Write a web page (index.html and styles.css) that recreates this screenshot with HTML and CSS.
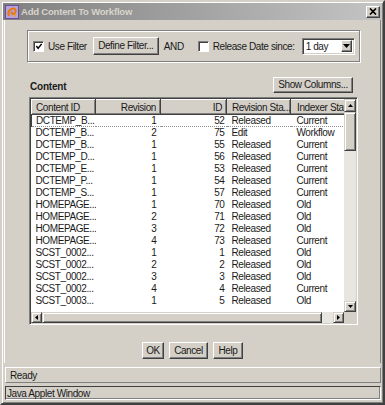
FILE: index.html
```html
<!DOCTYPE html>
<html lang="en">
  <head>
    <meta charset="UTF-8" />
    <meta name="viewport" content="width=device-width, initial-scale=1.0" />
    <title>Add Content To Workflow</title>
    <link rel="stylesheet" href="styles.css">
  </head>
  <body>
    <div class="window">
      <div class="titlebar">
        <svg class="app-icon" width="14" height="14" viewBox="0 0 14 14">
          <rect x="0.5" y="0.5" width="13" height="13" fill="#b7a3dc" stroke="#6a4c9c" />
          <path d="M4 11 C2 7 5 3 9 3.5 C11.5 4.5 11 8.5 8.5 9 C6.5 9.5 6 7.5 7.5 6.5" fill="none" stroke="#e8780c" stroke-width="2" />
          <circle cx="10" cy="10.5" r="1.3" fill="#f0a020" />
        </svg>
        <span class="title">Add Content To Workflow</span>
        <span class="close-btn">
          <svg width="8" height="7" viewBox="0 0 8 7">
            <path d="M1 0.5 L7 6.5 M7 0.5 L1 6.5" stroke="#000" stroke-width="1.7" />
          </svg>
        </span>
      </div>

      <div class="main">
        <div class="filter-group">
          <span class="check-box">
            <svg width="9" height="9" viewBox="0 0 9 9">
              <path d="M1.5 4 L3.5 6.5 L7.5 1.5" fill="none" stroke="#000" stroke-width="1.6" />
            </svg>
          </span>
          <span class="check-label">Use Filter</span>
          <button class="btn btn-filter">Define Filter...</button>
          <span class="and">AND</span>
          <span class="check-box"></span>
          <span class="check-label">Release Date since:</span>
          <div class="combo">
            <span class="combo-text">1 day</span>
            <span class="combo-arrow">
              <svg width="7" height="4" viewBox="0 0 7 4"><polygon points="0,0 7,0 3.5,4" fill="#000" /></svg>
            </span>
          </div>
        </div>

        <div class="content-head">
          <span class="section-label">Content</span>
          <button class="btn btn-columns">Show Columns...</button>
        </div>

        <div class="table-box">
          <div class="viewport">
            <table class="grid">
              <colgroup>
                <col class="c-name" />
                <col class="c-rev" />
                <col class="c-id" />
                <col class="c-status" />
                <col class="c-indexer" />
              </colgroup>
              <thead>
                <tr>
                  <th class="left">Content ID</th>
                  <th class="right">Revision</th>
                  <th class="right">ID</th>
                  <th class="left status">Revision Sta...</th>
                  <th class="left indexer">Indexer Stat</th>
                </tr>
              </thead>
              <tbody>
                <tr class="focused"><td>DCTEMP_B...</td><td class="num">1</td><td class="id">52</td><td class="status">Released</td><td class="indexer">Current</td></tr>
                <tr><td>DCTEMP_B...</td><td class="num">2</td><td class="id">75</td><td class="status">Edit</td><td class="indexer">Workflow</td></tr>
                <tr><td>DCTEMP_B...</td><td class="num">1</td><td class="id">55</td><td class="status">Released</td><td class="indexer">Current</td></tr>
                <tr><td>DCTEMP_D...</td><td class="num">1</td><td class="id">56</td><td class="status">Released</td><td class="indexer">Current</td></tr>
                <tr><td>DCTEMP_E...</td><td class="num">1</td><td class="id">53</td><td class="status">Released</td><td class="indexer">Current</td></tr>
                <tr><td>DCTEMP_P...</td><td class="num">1</td><td class="id">54</td><td class="status">Released</td><td class="indexer">Current</td></tr>
                <tr><td>DCTEMP_S...</td><td class="num">1</td><td class="id">57</td><td class="status">Released</td><td class="indexer">Current</td></tr>
                <tr><td>HOMEPAGE...</td><td class="num">1</td><td class="id">70</td><td class="status">Released</td><td class="indexer">Old</td></tr>
                <tr><td>HOMEPAGE...</td><td class="num">2</td><td class="id">71</td><td class="status">Released</td><td class="indexer">Old</td></tr>
                <tr><td>HOMEPAGE...</td><td class="num">3</td><td class="id">72</td><td class="status">Released</td><td class="indexer">Old</td></tr>
                <tr><td>HOMEPAGE...</td><td class="num">4</td><td class="id">73</td><td class="status">Released</td><td class="indexer">Current</td></tr>
                <tr><td>SCST_0002...</td><td class="num">1</td><td class="id">1</td><td class="status">Released</td><td class="indexer">Old</td></tr>
                <tr><td>SCST_0002...</td><td class="num">2</td><td class="id">2</td><td class="status">Released</td><td class="indexer">Old</td></tr>
                <tr><td>SCST_0002...</td><td class="num">3</td><td class="id">3</td><td class="status">Released</td><td class="indexer">Old</td></tr>
                <tr><td>SCST_0002...</td><td class="num">4</td><td class="id">4</td><td class="status">Released</td><td class="indexer">Current</td></tr>
                <tr><td>SCST_0003...</td><td class="num">1</td><td class="id">5</td><td class="status">Released</td><td class="indexer">Old</td></tr>
              </tbody>
            </table>
          </div>

          <div class="vscroll">
            <span class="arrow-btn up">
              <svg width="5" height="3" viewBox="0 0 5 3"><polygon points="0,3 5,3 2.5,0" fill="#000" /></svg>
            </span>
            <span class="thumb-v"></span>
            <span class="track"></span>
            <span class="arrow-btn down">
              <svg width="5" height="3" viewBox="0 0 5 3"><polygon points="0,0 5,0 2.5,3" fill="#000" /></svg>
            </span>
          </div>

          <div class="hscroll">
            <span class="arrow-btn left">
              <svg width="3" height="5" viewBox="0 0 3 5"><polygon points="3,0 3,5 0,2.5" fill="#000" /></svg>
            </span>
            <span class="thumb-h"></span>
            <span class="track"></span>
            <span class="arrow-btn right">
              <svg width="3" height="5" viewBox="0 0 3 5"><polygon points="0,0 0,5 3,2.5" fill="#000" /></svg>
            </span>
          </div>

          <div class="corner"></div>
        </div>

        <div class="actions">
          <button class="btn btn-ok">OK</button>
          <button class="btn btn-cancel">Cancel</button>
          <button class="btn btn-help">Help</button>
        </div>
      </div>

      <div class="status-bar">Ready</div>
      <div class="applet-bar">Java Applet Window</div>
    </div>
  </body>
</html>
```

FILE: styles.css
```css
* {
  box-sizing: border-box;
}
body {
  margin: 0;
  font-family: "Liberation Sans", Arial, sans-serif;
  font-size: 10px;
  letter-spacing: -0.4px;
  color: #1a1a1a;
}
.window {
  width: 385px;
  height: 405px;
  background: #d4d0c8;
  border: 2px solid;
  border-color: #d4d0c8 #404040 #404040 #d4d0c8;
  box-shadow: inset 1px 1px #fff, inset -1px -1px #808080;
  padding: 1px;
  display: flex;
  flex-direction: column;
}

/* title bar */
.titlebar {
  height: 17px;
  display: flex;
  align-items: center;
  padding: 0 2px 0 2px;
  background: linear-gradient(to right, #808080, #c4c4c4);
}
.app-icon {
  flex: none;
}
.title {
  flex: 1;
  margin-left: 2px;
  font-weight: bold;
  font-size: 9.5px;
  letter-spacing: -0.2px;
  color: #d8d4cc;
}
.close-btn {
  width: 14px;
  height: 12px;
  display: flex;
  align-items: center;
  justify-content: center;
  background: #d4d0c8;
  border: 1px solid;
  border-color: #fff #404040 #404040 #fff;
  box-shadow: inset -1px -1px #808080;
}

/* main panel */
.main {
  height: 343px;
  margin: 0 1px;
  border-left: 1px solid #fff;
  border-right: 1px solid #808080;
}
.btn {
  font: inherit;
  color: inherit;
  letter-spacing: inherit;
  background: #d4d0c8;
  border: 1px solid;
  border-color: #fff #404040 #404040 #fff;
  box-shadow: inset -1px -1px #808080;
  padding: 0;
  line-height: 1;
}

.filter-group {
  margin: 10px 0 0 22px;
  width: 333px;
  height: 32px;
  border: 1px solid #808080;
  box-shadow: inset 1px 1px #fff, 1px 1px #fff;
  display: flex;
  align-items: center;
  padding-left: 5px;
}
.check-box {
  width: 11px;
  height: 11px;
  background: #fff;
  border: 1px solid;
  border-color: #808080 #fff #fff #808080;
  box-shadow: inset 1px 1px #404040;
  display: flex;
  align-items: center;
  justify-content: center;
  padding: 1px 0 0 1px;
  flex: none;
}
.check-label {
  margin-left: 4px;
}
.btn-filter {
  width: 66px;
  height: 18px;
  margin-left: 6px;
}
.and {
  margin: 0 14px 0 5px;
}
.combo {
  margin-left: 7px;
  width: 53px;
  height: 17px;
  background: #fff;
  border: 1px solid;
  border-color: #808080 #fff #fff #808080;
  box-shadow: inset 1px 1px #404040, inset -1px -1px #d4d0c8;
  display: flex;
  align-items: center;
  padding: 2px 2px 2px 3px;
}
.combo-text {
  flex: 1;
}
.combo-arrow {
  width: 11px;
  height: 12px;
  background: #d4d0c8;
  border: 1px solid;
  border-color: #fff #404040 #404040 #fff;
  box-shadow: inset -1px -1px #808080;
  display: flex;
  align-items: center;
  justify-content: center;
}

.content-head {
  margin: 15px 0 0 24px;
  width: 324px;
  height: 16px;
  display: flex;
  align-items: center;
  justify-content: space-between;
}
.section-label {
  font-weight: bold;
  padding: 3px 0 0 1px;
  letter-spacing: -0.2px;
}
.btn-columns {
  width: 80px;
  height: 16px;
}

/* content table */
.table-box {
  margin: 4px 0 0 24px;
  width: 329px;
  height: 228px;
  border: 1px solid;
  border-color: #808080 #fff #fff #808080;
  box-shadow: inset 1px 1px #404040, inset -1px -1px #d4d0c8;
  padding: 1px;
  display: grid;
  grid-template-columns: 1fr 12px;
  grid-template-rows: 1fr 11px;
}
.viewport {
  background: #fff;
  overflow: hidden;
}
.grid {
  border-collapse: collapse;
  table-layout: fixed;
  width: 339px;
}
.c-name { width: 64px; }
.c-rev { width: 65px; }
.c-id { width: 66px; }
.c-status { width: 64px; }
.c-indexer { width: 80px; }
.grid th {
  height: 15px;
  font-weight: normal;
  background: #d4d0c8;
  border: 1px solid;
  border-color: #fff #404040 #404040 #fff;
  box-shadow: inset -1px -1px #808080;
  padding: 0 4px;
  white-space: nowrap;
  overflow: hidden;
}
.grid th.left { text-align: left; }
.grid th.right { text-align: right; }
.grid th.status { padding-left: 5px; }
.grid th.indexer { padding-left: 6px; }
.grid td {
  height: 12px;
  line-height: 12px;
  padding: 0 0 0 4px;
  white-space: nowrap;
  overflow: hidden;
}
.grid td.num {
  text-align: right;
  padding-right: 4px;
}
.grid td.id {
  text-align: right;
  padding-right: 2px;
}
.grid td.status { padding-left: 5px; }
.grid td.indexer { padding-left: 6px; }
.grid tr.focused td {
  border-top: 1px dotted #909090;
  border-bottom: 1px dotted #909090;
  line-height: 10px;
}
.grid tr.focused td:first-child {
  border-left: 1px solid #404040;
}

.vscroll,
.hscroll {
  display: flex;
  background: #e8e6e0;
}
.vscroll {
  flex-direction: column;
}
.arrow-btn,
.thumb-v,
.thumb-h {
  flex: none;
  background: #d4d0c8;
  border: 1px solid;
  border-color: #d4d0c8 #404040 #404040 #d4d0c8;
  box-shadow: inset 1px 1px #fff, inset -1px -1px #808080;
  display: flex;
  align-items: center;
  justify-content: center;
}
.arrow-btn.up { height: 13px; }
.arrow-btn.down { height: 11px; }
.arrow-btn.left,
.arrow-btn.right { width: 11px; }
.thumb-v { height: 39px; }
.thumb-h { width: 280px; }
.track {
  flex: 1;
}
.corner {
  background: #d4d0c8;
}

.actions {
  margin-top: 17px;
  display: flex;
  justify-content: center;
  gap: 5px;
}
.actions .btn {
  height: 17px;
}
.btn-ok { width: 22px; }
.btn-cancel { width: 39px; }
.btn-help { width: 30px; }

/* status panels */
.status-bar {
  margin: 4px 1px 0 2px;
  height: 16px;
  border: 1px solid;
  border-color: #fff #808080 #808080 #fff;
  padding: 2px 0 0 4px;
}
.applet-bar {
  margin: 3px 1px 0 2px;
  height: 14px;
  border: 1px solid;
  border-color: #404040 #fff #fff #404040;
  box-shadow: inset -1px -1px #808080;
  padding: 1px 0 0 1px;
}
```
